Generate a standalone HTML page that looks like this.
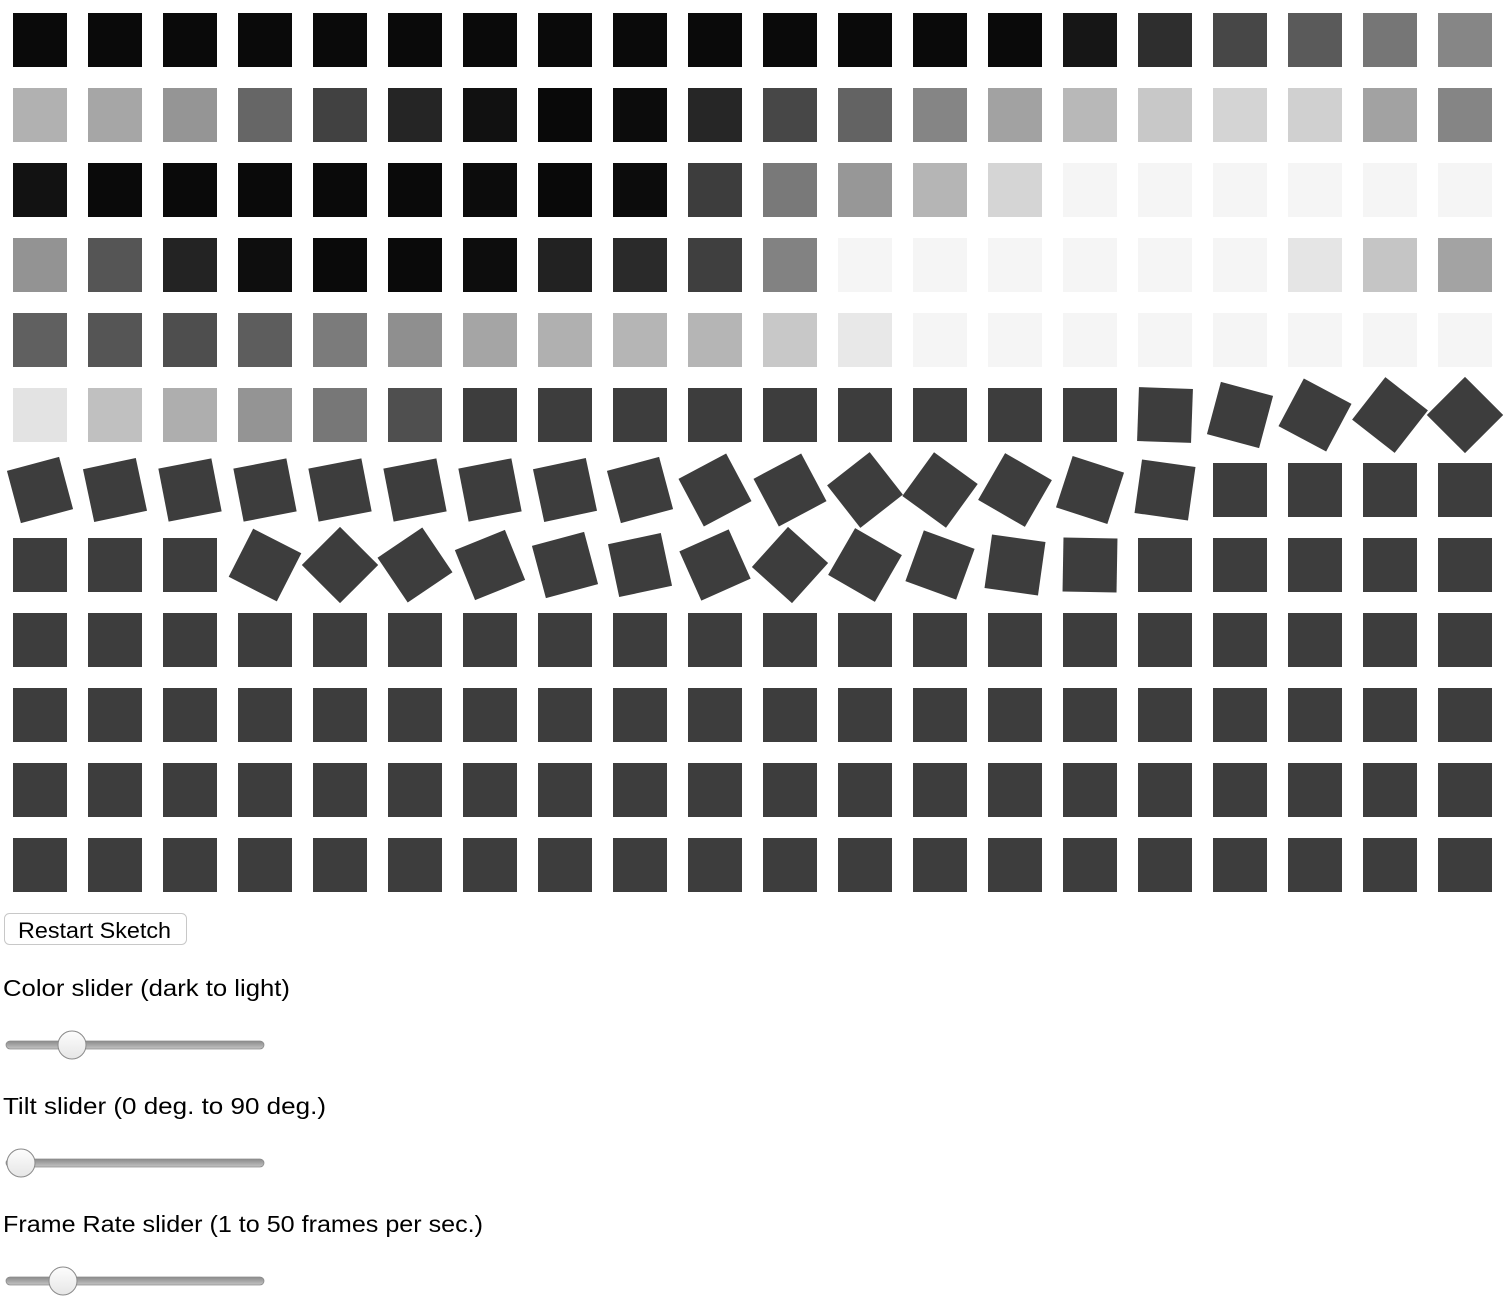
<!DOCTYPE html>
<html><head><meta charset="utf-8"><style>
html,body{margin:0;padding:0;background:#fff;}
svg{display:block;}
text{font-family:"Liberation Sans",sans-serif;fill:#000;}
.d rect{fill:#3d3d3d}
</style></head><body>
<svg width="1510" height="1306" viewBox="0 0 1510 1306" xmlns="http://www.w3.org/2000/svg">
<defs>
<linearGradient id="tr" x1="0" y1="0" x2="0" y2="1"><stop offset="0" stop-color="#8a8a8a"/><stop offset="1" stop-color="#c4c4c4"/></linearGradient>
<linearGradient id="th" x1="0" y1="0" x2="0" y2="1"><stop offset="0" stop-color="#fdfdfd"/><stop offset="1" stop-color="#e6e6e6"/></linearGradient>
<pattern id="p" x="13" y="613" width="75" height="75" patternUnits="userSpaceOnUse"><rect x="0" y="0" width="54" height="54" fill="#3d3d3d"/></pattern>
</defs>
<g transform="translate(1,1)">
<rect x="12" y="12" width="54" height="54" fill="#0a0a0a"/><rect x="87" y="12" width="54" height="54" fill="#0a0a0a"/><rect x="162" y="12" width="54" height="54" fill="#0a0a0a"/><rect x="237" y="12" width="54" height="54" fill="#0a0a0a"/><rect x="312" y="12" width="54" height="54" fill="#0a0a0a"/><rect x="387" y="12" width="54" height="54" fill="#0a0a0a"/><rect x="462" y="12" width="54" height="54" fill="#0a0a0a"/><rect x="537" y="12" width="54" height="54" fill="#0a0a0a"/><rect x="612" y="12" width="54" height="54" fill="#0a0a0a"/><rect x="687" y="12" width="54" height="54" fill="#0a0a0a"/><rect x="762" y="12" width="54" height="54" fill="#0a0a0a"/><rect x="837" y="12" width="54" height="54" fill="#0a0a0a"/><rect x="912" y="12" width="54" height="54" fill="#0a0a0a"/><rect x="987" y="12" width="54" height="54" fill="#0a0a0a"/><rect x="1062" y="12" width="54" height="54" fill="#161616"/><rect x="1137" y="12" width="54" height="54" fill="#2e2e2e"/><rect x="1212" y="12" width="54" height="54" fill="#474747"/><rect x="1287" y="12" width="54" height="54" fill="#5a5a5a"/><rect x="1362" y="12" width="54" height="54" fill="#767676"/><rect x="1437" y="12" width="54" height="54" fill="#868686"/>
<rect x="12" y="87" width="54" height="54" fill="#b1b1b1"/><rect x="87" y="87" width="54" height="54" fill="#a6a6a6"/><rect x="162" y="87" width="54" height="54" fill="#959595"/><rect x="237" y="87" width="54" height="54" fill="#666666"/><rect x="312" y="87" width="54" height="54" fill="#414141"/><rect x="387" y="87" width="54" height="54" fill="#252525"/><rect x="462" y="87" width="54" height="54" fill="#111111"/><rect x="537" y="87" width="54" height="54" fill="#090909"/><rect x="612" y="87" width="54" height="54" fill="#0c0c0c"/><rect x="687" y="87" width="54" height="54" fill="#262626"/><rect x="762" y="87" width="54" height="54" fill="#474747"/><rect x="837" y="87" width="54" height="54" fill="#636363"/><rect x="912" y="87" width="54" height="54" fill="#858585"/><rect x="987" y="87" width="54" height="54" fill="#a2a2a2"/><rect x="1062" y="87" width="54" height="54" fill="#b8b8b8"/><rect x="1137" y="87" width="54" height="54" fill="#c8c8c8"/><rect x="1212" y="87" width="54" height="54" fill="#d4d4d4"/><rect x="1287" y="87" width="54" height="54" fill="#d0d0d0"/><rect x="1362" y="87" width="54" height="54" fill="#a2a2a2"/><rect x="1437" y="87" width="54" height="54" fill="#858585"/>
<rect x="12" y="162" width="54" height="54" fill="#121212"/><rect x="87" y="162" width="54" height="54" fill="#0a0a0a"/><rect x="162" y="162" width="54" height="54" fill="#0a0a0a"/><rect x="237" y="162" width="54" height="54" fill="#0a0a0a"/><rect x="312" y="162" width="54" height="54" fill="#0a0a0a"/><rect x="387" y="162" width="54" height="54" fill="#0a0a0a"/><rect x="462" y="162" width="54" height="54" fill="#0c0c0c"/><rect x="537" y="162" width="54" height="54" fill="#090909"/><rect x="612" y="162" width="54" height="54" fill="#0c0c0c"/><rect x="687" y="162" width="54" height="54" fill="#3d3d3d"/><rect x="762" y="162" width="54" height="54" fill="#797979"/><rect x="837" y="162" width="54" height="54" fill="#979797"/><rect x="912" y="162" width="54" height="54" fill="#b5b5b5"/><rect x="987" y="162" width="54" height="54" fill="#d5d5d5"/><rect x="1062" y="162" width="54" height="54" fill="#f5f5f5"/><rect x="1137" y="162" width="54" height="54" fill="#f5f5f5"/><rect x="1212" y="162" width="54" height="54" fill="#f5f5f5"/><rect x="1287" y="162" width="54" height="54" fill="#f5f5f5"/><rect x="1362" y="162" width="54" height="54" fill="#f5f5f5"/><rect x="1437" y="162" width="54" height="54" fill="#f5f5f5"/>
<rect x="12" y="237" width="54" height="54" fill="#939393"/><rect x="87" y="237" width="54" height="54" fill="#555555"/><rect x="162" y="237" width="54" height="54" fill="#232323"/><rect x="237" y="237" width="54" height="54" fill="#0e0e0e"/><rect x="312" y="237" width="54" height="54" fill="#0a0a0a"/><rect x="387" y="237" width="54" height="54" fill="#0a0a0a"/><rect x="462" y="237" width="54" height="54" fill="#0d0d0d"/><rect x="537" y="237" width="54" height="54" fill="#222222"/><rect x="612" y="237" width="54" height="54" fill="#2a2a2a"/><rect x="687" y="237" width="54" height="54" fill="#3f3f3f"/><rect x="762" y="237" width="54" height="54" fill="#828282"/><rect x="837" y="237" width="54" height="54" fill="#f5f5f5"/><rect x="912" y="237" width="54" height="54" fill="#f5f5f5"/><rect x="987" y="237" width="54" height="54" fill="#f5f5f5"/><rect x="1062" y="237" width="54" height="54" fill="#f5f5f5"/><rect x="1137" y="237" width="54" height="54" fill="#f5f5f5"/><rect x="1212" y="237" width="54" height="54" fill="#f5f5f5"/><rect x="1287" y="237" width="54" height="54" fill="#e5e5e5"/><rect x="1362" y="237" width="54" height="54" fill="#c5c5c5"/><rect x="1437" y="237" width="54" height="54" fill="#a3a3a3"/>
<rect x="12" y="312" width="54" height="54" fill="#606060"/><rect x="87" y="312" width="54" height="54" fill="#555555"/><rect x="162" y="312" width="54" height="54" fill="#4e4e4e"/><rect x="237" y="312" width="54" height="54" fill="#5d5d5d"/><rect x="312" y="312" width="54" height="54" fill="#7b7b7b"/><rect x="387" y="312" width="54" height="54" fill="#8f8f8f"/><rect x="462" y="312" width="54" height="54" fill="#a5a5a5"/><rect x="537" y="312" width="54" height="54" fill="#b0b0b0"/><rect x="612" y="312" width="54" height="54" fill="#b5b5b5"/><rect x="687" y="312" width="54" height="54" fill="#b5b5b5"/><rect x="762" y="312" width="54" height="54" fill="#c8c8c8"/><rect x="837" y="312" width="54" height="54" fill="#e8e8e8"/><rect x="912" y="312" width="54" height="54" fill="#f5f5f5"/><rect x="987" y="312" width="54" height="54" fill="#f5f5f5"/><rect x="1062" y="312" width="54" height="54" fill="#f5f5f5"/><rect x="1137" y="312" width="54" height="54" fill="#f5f5f5"/><rect x="1212" y="312" width="54" height="54" fill="#f5f5f5"/><rect x="1287" y="312" width="54" height="54" fill="#f5f5f5"/><rect x="1362" y="312" width="54" height="54" fill="#f5f5f5"/><rect x="1437" y="312" width="54" height="54" fill="#f5f5f5"/>
<rect x="12" y="387" width="54" height="54" fill="#e3e3e3"/><rect x="87" y="387" width="54" height="54" fill="#c0c0c0"/><rect x="162" y="387" width="54" height="54" fill="#aeaeae"/><rect x="237" y="387" width="54" height="54" fill="#949494"/><rect x="312" y="387" width="54" height="54" fill="#777777"/><rect x="387" y="387" width="54" height="54" fill="#4f4f4f"/>
<g class="d">
<rect x="462" y="387" width="54" height="54"/><rect x="537" y="387" width="54" height="54"/><rect x="612" y="387" width="54" height="54"/><rect x="687" y="387" width="54" height="54"/><rect x="762" y="387" width="54" height="54"/><rect x="837" y="387" width="54" height="54"/><rect x="912" y="387" width="54" height="54"/><rect x="987" y="387" width="54" height="54"/><rect x="1062" y="387" width="54" height="54"/>
<rect x="1137" y="387" width="54" height="54" transform="rotate(2 1164 414)"/>
<rect x="1212" y="387" width="54" height="54" transform="rotate(15 1239 414)"/>
<rect x="1287" y="387" width="54" height="54" transform="rotate(28 1314 414)"/>
<rect x="1362" y="387" width="54" height="54" transform="rotate(38 1389 414)"/>
<rect x="1437" y="387" width="54" height="54" transform="rotate(45 1464 414)"/>
<rect x="12" y="462" width="54" height="54" transform="rotate(-15 39 489)"/>
<rect x="87" y="462" width="54" height="54" transform="rotate(-12 114 489)"/>
<rect x="162" y="462" width="54" height="54" transform="rotate(-11 189 489)"/>
<rect x="237" y="462" width="54" height="54" transform="rotate(-11 264 489)"/>
<rect x="312" y="462" width="54" height="54" transform="rotate(-11 339 489)"/>
<rect x="387" y="462" width="54" height="54" transform="rotate(-11 414 489)"/>
<rect x="462" y="462" width="54" height="54" transform="rotate(-11 489 489)"/>
<rect x="537" y="462" width="54" height="54" transform="rotate(-12 564 489)"/>
<rect x="612" y="462" width="54" height="54" transform="rotate(-15 639 489)"/>
<rect x="687" y="462" width="54" height="54" transform="rotate(-28 714 489)"/>
<rect x="762" y="462" width="54" height="54" transform="rotate(-28 789 489)"/>
<rect x="837" y="462" width="54" height="54" transform="rotate(-38 864 489)"/>
<rect x="912" y="462" width="54" height="54" transform="rotate(36 939 489)"/>
<rect x="987" y="462" width="54" height="54" transform="rotate(30 1014 489)"/>
<rect x="1062" y="462" width="54" height="54" transform="rotate(18 1089 489)"/>
<rect x="1137" y="462" width="54" height="54" transform="rotate(8 1164 489)"/>
<rect x="1212" y="462" width="54" height="54"/><rect x="1287" y="462" width="54" height="54"/><rect x="1362" y="462" width="54" height="54"/><rect x="1437" y="462" width="54" height="54"/>
<rect x="12" y="537" width="54" height="54"/><rect x="87" y="537" width="54" height="54"/><rect x="162" y="537" width="54" height="54"/>
<rect x="237" y="537" width="54" height="54" transform="rotate(27 264 564)"/>
<rect x="312" y="537" width="54" height="54" transform="rotate(45 339 564)"/>
<rect x="387" y="537" width="54" height="54" transform="rotate(-34 414 564)"/>
<rect x="462" y="537" width="54" height="54" transform="rotate(-22 489 564)"/>
<rect x="537" y="537" width="54" height="54" transform="rotate(-15 564 564)"/>
<rect x="612" y="537" width="54" height="54" transform="rotate(-12 639 564)"/>
<rect x="687" y="537" width="54" height="54" transform="rotate(-24 714 564)"/>
<rect x="762" y="537" width="54" height="54" transform="rotate(42 789 564)"/>
<rect x="837" y="537" width="54" height="54" transform="rotate(30 864 564)"/>
<rect x="912" y="537" width="54" height="54" transform="rotate(20 939 564)"/>
<rect x="987" y="537" width="54" height="54" transform="rotate(8 1014 564)"/>
<rect x="1062" y="537" width="54" height="54" transform="rotate(1 1089 564)"/>
<rect x="1137" y="537" width="54" height="54"/><rect x="1212" y="537" width="54" height="54"/><rect x="1287" y="537" width="54" height="54"/><rect x="1362" y="537" width="54" height="54"/><rect x="1437" y="537" width="54" height="54"/>
</g>
</g>
<rect x="13" y="613" width="1479" height="279" fill="url(#p)"/>

<rect x="4.5" y="913.5" width="182" height="31" rx="5" fill="#fff" stroke="#c8c8c8"/>
<text x="18" y="938" font-size="22" textLength="153" lengthAdjust="spacingAndGlyphs">Restart Sketch</text>

<text x="3" y="996" font-size="23.5" textLength="287" lengthAdjust="spacingAndGlyphs">Color slider (dark to light)</text>
<rect x="6" y="1041" width="258" height="8" rx="4" fill="url(#tr)" stroke="#8c8c8c" stroke-width="0.8"/>
<circle cx="72" cy="1045" r="14" fill="url(#th)" stroke="#8a8a8a" stroke-width="1"/>

<text x="3" y="1114" font-size="23.5" textLength="323" lengthAdjust="spacingAndGlyphs">Tilt slider (0 deg. to 90 deg.)</text>
<rect x="6" y="1159" width="258" height="8" rx="4" fill="url(#tr)" stroke="#8c8c8c" stroke-width="0.8"/>
<circle cx="21" cy="1163" r="14" fill="url(#th)" stroke="#8a8a8a" stroke-width="1"/>

<text x="3" y="1232" font-size="23.5" textLength="480" lengthAdjust="spacingAndGlyphs">Frame Rate slider (1 to 50 frames per sec.)</text>
<rect x="6" y="1277" width="258" height="8" rx="4" fill="url(#tr)" stroke="#8c8c8c" stroke-width="0.8"/>
<circle cx="63" cy="1281" r="14" fill="url(#th)" stroke="#8a8a8a" stroke-width="1"/>
</svg>
</body></html>
